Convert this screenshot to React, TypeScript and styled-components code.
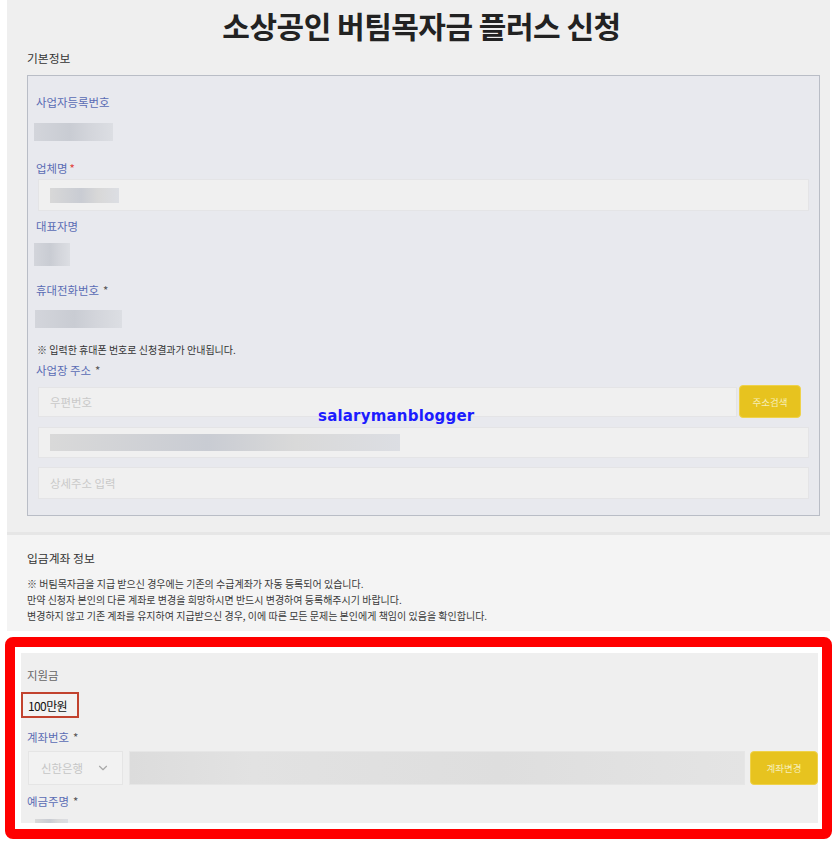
import * as React from "react";
import styled, { createGlobalStyle } from "styled-components";
import { ChevronDown } from "lucide-react";

const GlobalStyle = createGlobalStyle`
  html, body {
    margin: 0;
    padding: 0;
    background: #ffffff;
  }
  body {
    font-family: "Noto Sans CJK KR", "Noto Sans", sans-serif;
    color: #333;
  }
`;

const colors = {
  page: "#efefef",
  lower: "#f4f4f4",
  panel: "#e8e9ee",
  panelBorder: "#b9bdc6",
  field: "#f0f0f0",
  fieldBorder: "#e4e4e6",
  label: "#5a6cb4",
  blur: "#d3d5db",
  yellow: "#e7c31f",
  red: "#ff0000",
};

const Page = styled.div`
  position: relative;
  width: 823px;
  margin-left: 7px;
  background: ${colors.page};
`;

const Title = styled.h1`
  margin: 0;
  height: 50px;
  padding-left: 6px;
  font-size: 30px;
  font-weight: 700;
  letter-spacing: -0.5px;
  line-height: 50px;
  text-align: center;
  color: #222;
`;

const SectionTitle = styled.div`
  padding-left: 20px;
  font-size: 11.8px;
  line-height: 16px;
  color: #333;
`;

const Panel = styled.div`
  margin: 9px 0 0 20px;
  width: 793px;
  box-sizing: border-box;
  padding: 18px 10px 16px 8px;
  border: 1px solid ${colors.panelBorder};
  background: ${colors.panel};
  display: flex;
  flex-direction: column;
`;

const Label = styled.div<{ $mt?: number; $gray?: boolean }>`
  margin-top: ${(p) => p.$mt ?? 0}px;
  font-size: 11.4px;
  line-height: 16px;
  color: ${(p) => (p.$gray ? "#666" : colors.label)};
`;

const Star = styled.span<{ $red?: boolean }>`
  margin-left: ${(p) => (p.$red ? 2 : 4)}px;
  color: ${(p) => (p.$red ? "#e0413a" : "#555")};
`;

const Blurred = styled.div<{ $mt?: number; $w: number; $h: number; $ml?: number; $tone?: string }>`
  flex: none;
  margin-top: ${(p) => p.$mt ?? 0}px;
  margin-left: ${(p) => p.$ml ?? 0}px;
  width: ${(p) => p.$w}px;
  height: ${(p) => p.$h}px;
  background: linear-gradient(
    90deg,
    ${(p) => p.$tone ?? colors.blur} 0%,
    #c9ccd3 45%,
    ${(p) => p.$tone ?? colors.blur} 70%,
    #dcdee3 100%
  );
  filter: blur(0.6px);
`;

const Field = styled.div<{ $mt?: number; $h?: number; $grow?: boolean }>`
  flex: ${(p) => (p.$grow ? "1 1 auto" : "none")};
  margin-top: ${(p) => p.$mt ?? 0}px;
  margin-left: 2px;
  height: ${(p) => p.$h ?? 32}px;
  box-sizing: border-box;
  display: flex;
  align-items: center;
  padding-left: 11px;
  background: ${colors.field};
  border: 1px solid ${colors.fieldBorder};
  font-size: 11.4px;
  color: #c9c9c9;
`;

const Note = styled.div<{ $mt?: number }>`
  margin-top: ${(p) => p.$mt ?? 0}px;
  margin-left: 1px;
  font-size: 10px;
  line-height: 16px;
  color: #333;
`;

const Row = styled.div<{ $mt?: number }>`
  margin-top: ${(p) => p.$mt ?? 0}px;
  display: flex;
  align-items: center;
`;

const YellowButton = styled.button<{ $w: number; $h: number; $ml?: number; $mr?: number }>`
  flex: none;
  width: ${(p) => p.$w}px;
  height: ${(p) => p.$h}px;
  margin-left: ${(p) => p.$ml ?? 0}px;
  margin-right: ${(p) => p.$mr ?? 0}px;
  padding: 0;
  border: 1px solid #efd24a;
  border-radius: 4px;
  background: ${colors.yellow};
  color: #f6eeb8;
  font-family: inherit;
  font-size: 9.5px;
`;

const Divider = styled.div`
  margin-top: 16px;
  height: 3px;
  background: #e6e6e6;
`;

const Lower = styled.div`
  background: ${colors.lower};
  padding: 15px 0 7px;
`;

const NoteBlock = styled.div`
  margin-top: 10px;
  padding-left: 20px;
  font-size: 10px;
  line-height: 16px;
  color: #3a3a3a;
`;

const Watermark = styled.div`
  position: absolute;
  left: 311px;
  top: 407px;
  font-family: "DejaVu Sans", sans-serif;
  font-weight: 700;
  font-size: 15px;
  color: #1c1cff;
  letter-spacing: 0.2px;
`;

const Highlight = styled.div`
  margin: 6px 0 0 5px;
  width: 827px;
  box-sizing: border-box;
  border: 10px solid ${colors.red};
  border-radius: 8px;
  padding: 6px 4px 6px 6px;
  background: #ffffff;
`;

const Inner = styled.div`
  background: #efefef;
  height: 170px;
  display: flex;
  flex-direction: column;
  padding-left: 6px;
  overflow: hidden;
`;

const Amount = styled.div`
  margin: 9px 0 0 -6px;
  width: 58px;
  height: 28px;
  box-sizing: border-box;
  border: 2px solid #c2432f;
  padding-left: 5px;
  display: flex;
  align-items: center;
  font-size: 12px;
  color: #111;
  background: #f3f3f3;
  letter-spacing: -0.6px;
`;

const BankSelect = styled.div`
  flex: none;
  width: 95px;
  height: 34px;
  box-sizing: border-box;
  margin-left: 1px;
  display: flex;
  align-items: center;
  justify-content: space-between;
  padding: 0 12px;
  background: #f2f2f2;
  border: 1px solid #e5e5e5;
  font-size: 11.4px;
  color: #c6c6c6;
`;

const AccountBox = styled.div`
  flex: 1;
  height: 34px;
  margin-left: 6px;
  background: linear-gradient(90deg, #dcdcdc 0%, #e2e2e2 20%, #dedede 60%, #e4e4e4 100%);
  border: 1px solid #e6e6e6;
  box-sizing: border-box;
`;

export default function App() {
  return (
    <>
      <GlobalStyle />
      <Page>
        <Title>소상공인 버팀목자금 플러스 신청</Title>
        <SectionTitle>기본정보</SectionTitle>
        <Panel>
          <Label>사업자등록번호</Label>
          <Blurred $mt={13} $w={79} $h={18} $ml={-2} />
          <Label $mt={19}>
            업체명<Star $red>*</Star>
          </Label>
          <Field $mt={3}>
            <Blurred $w={69} $h={15} $tone="#d8d8d8" />
          </Field>
          <Label $mt={7}>대표자명</Label>
          <Blurred $mt={9} $w={36} $h={23} $ml={-2} />
          <Label $mt={16}>
            휴대전화번호<Star>*</Star>
          </Label>
          <Blurred $mt={12} $w={87} $h={18} $ml={-1} />
          <Note $mt={14}>※ 입력한 휴대폰 번호로 신청결과가 안내됩니다.</Note>
          <Label $mt={4}>
            사업장 주소<Star>*</Star>
          </Label>
          <Row $mt={7}>
            <Field $h={30} $grow>
              우편번호
            </Field>
            <YellowButton $w={62} $h={33} $ml={2} $mr={8}>
              주소검색
            </YellowButton>
          </Row>
          <Field $mt={9} $h={31}>
            <Blurred $w={350} $h={17} $tone="#d9d9d9" />
          </Field>
          <Field $mt={9}>상세주소 입력</Field>
        </Panel>
        <Divider />
        <Lower>
          <SectionTitle>입금계좌 정보</SectionTitle>
          <NoteBlock>
            ※ 버팀목자금을 지급 받으신 경우에는 기존의 수급계좌가 자동 등록되어 있습니다.
            <br />
            만약 신청자 본인의 다른 계좌로 변경을 희망하시면 반드시 변경하여 등록해주시기 바랍니다.
            <br />
            변경하지 않고 기존 계좌를 유지하여 지급받으신 경우, 이에 따른 모든 문제는 본인에게 책임이 있음을 확인합니다.
          </NoteBlock>
        </Lower>
        <Watermark>salarymanblogger</Watermark>
      </Page>
      <Highlight>
        <Inner>
          <Label $mt={14} $gray>
            지원금
          </Label>
          <Amount>100만원</Amount>
          <Label $mt={11}>
            계좌번호<Star>*</Star>
          </Label>
          <Row $mt={6}>
            <BankSelect>
              신한은행
              <ChevronDown size={14} color="#a8a8a8" />
            </BankSelect>
            <AccountBox />
            <YellowButton $w={68} $h={34} $ml={5}>
              계좌변경
            </YellowButton>
          </Row>
          <Label $mt={8}>
            예금주명<Star>*</Star>
          </Label>
          <Blurred $mt={10} $w={33} $h={4} $ml={8} $tone="#dadada" />
        </Inner>
      </Highlight>
    </>
  );
}
